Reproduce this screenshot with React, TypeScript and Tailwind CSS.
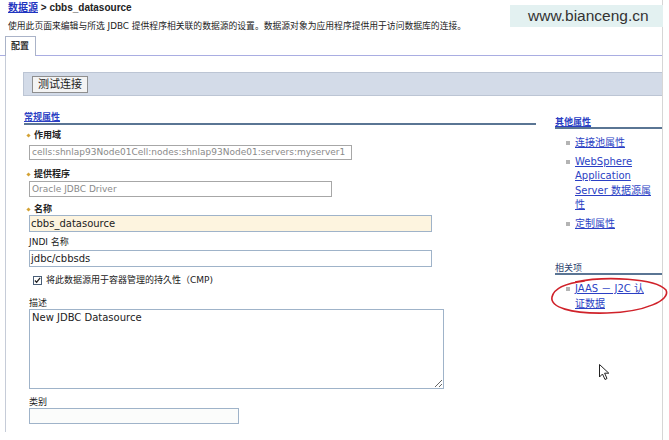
import React from "react"

const linkCls = "text-[#2b3fc4] underline underline-offset-[1px]"

function Field({ label, required, className = "" }: { label: string; required?: boolean; className?: string }) {
  return (
    <div className={"flex items-center h-[12px] text-[9px] leading-[12px] " + className}>
      {required ? (
        <span className="ml-[3px] mr-[4px] w-[3px] h-[3px] rotate-45 bg-[#d4a233]" />
      ) : (
        <span className="w-[5px]" />
      )}
      <span className={required ? "font-bold text-[#222]" : "text-[#222]"}>{label}</span>
    </div>
  )
}

function Bullet({ children }: { children: React.ReactNode }) {
  return (
    <li className="flex items-start">
      <span className="mt-[5px] ml-[11px] mr-[5px] w-[4px] h-[4px] bg-[#b4b4b4] shrink-0" />
      <span className={"w-[78px] " + linkCls}>{children}</span>
    </li>
  )
}

export default function App() {
  return (
    <div className="relative w-[669px] h-[440px] overflow-hidden bg-white text-[#1a1a1a] font-['DejaVu_Sans','Noto_Sans_CJK_SC',sans-serif]">
      <div className="flex h-full">
        <div className="w-[663px] border-r border-[#d6d6d6] flex flex-col pb-[8px]">
          {/* breadcrumb */}
          <div className="pl-[8px] pt-[1px]">
            <div className="h-[14px] text-[10px] leading-[14px] font-bold text-[#222] font-['Liberation_Sans','Noto_Sans_CJK_SC',sans-serif]">
              <span className="text-[#1f35c0] underline">数据源</span> &gt; cbbs_datasource
            </div>
            <div className="mt-[5px] h-[12px] text-[8.8px] leading-[12px] text-[#222] whitespace-nowrap">
              使用此页面来编辑与所选 JDBC 提供程序相关联的数据源的设置。数据源对象为应用程序提供用于访问数据库的连接。
            </div>
          </div>

          {/* tabs */}
          <div className="flex mt-[4px] h-[20px]">
            <div className="w-[5px] border-b border-[#a9ade2]" />
            <div className="w-[31px] border border-b-0 border-[#aab3c8] pl-[5px] pt-[3px] text-[9px] leading-[12px] font-bold text-[#333]">
              配置
            </div>
            <div className="flex-1 border-b border-[#a9ade2]" />
          </div>

          {/* panel */}
          <div className="flex-1 ml-[5px] border-l border-[#c6ccd8] pl-[17px] pt-[16px]">
            <div className="h-[24px] bg-[#d3dbe8] border border-r-0 border-[#bcc5d4] pl-[8px] pt-[3px] flex items-start">
              <button className="h-[17px] px-[5px] bg-[#f3f3f3] border border-[#8e8e8e] text-[11px] leading-[14px] text-[#222]">
                测试连接
              </button>
            </div>

            <div className="flex">
              {/* left column */}
              <div className="ml-[1px] w-[512px] mt-[15px]">
                <div className="h-[14px] border-b-2 border-[#5a7594] text-[9px] leading-[12px] font-bold">
                  <span className={linkCls}>常规属性</span>
                </div>
                <Field label="作用域" required className="mt-[4px]" />
                <div className="ml-[5px] mt-[4px] w-[323px] h-[15px] border border-[#a7a7a7] px-[2px] text-[9px] leading-[13px] text-[#8a8a8a] whitespace-nowrap overflow-hidden">
                  cells:shnlap93Node01Cell:nodes:shnlap93Node01:servers:myserver1
                </div>
                <Field label="提供程序" required className="mt-[8px]" />
                <div className="ml-[5px] mt-[1px] w-[303px] h-[16px] border border-[#a7a7a7] px-[2px] text-[9px] leading-[14px] text-[#8a8a8a] whitespace-nowrap">
                  Oracle JDBC Driver
                </div>
                <Field label="名称" required className="mt-[6px]" />
                <div className="ml-[5px] w-[403px] h-[17px] border border-[#9fb3c9] bg-[#fdf4df] px-[1px] text-[10px] leading-[15px] text-[#222] whitespace-nowrap">
                  cbbs_datasource
                </div>
                <Field label="JNDI 名称" className="mt-[4px]" />
                <div className="ml-[5px] mt-[2px] w-[403px] h-[17px] border border-[#9fb3c9] px-[1px] text-[10px] leading-[15px] text-[#222] whitespace-nowrap">
                  jdbc/cbbsds
                </div>
                <div className="mt-[7px] h-[12px] flex items-center text-[9px] leading-[12px]">
                  <span className="ml-[9px] mr-[4px] w-[9px] h-[9px] border border-[#4a5f78] bg-white flex items-center justify-center">
                    <svg viewBox="0 0 8 8" className="w-[7px] h-[7px]">
                      <path d="M1 4 L3 6 L7 1" fill="none" stroke="#222" strokeWidth="1.4" />
                    </svg>
                  </span>
                  <span className="text-[#222]">将此数据源用于容器管理的持久性（CMP)</span>
                </div>
                <Field label="描述" className="mt-[11px]" />
                <textarea
                  readOnly
                  defaultValue="New JDBC Datasource"
                  className="block ml-[5px] w-[415px] h-[80px] border border-[#9fb3c9] px-[2px] py-[1px] text-[10px] leading-[14px] text-[#222] outline-none"
                />
                <Field label="类别" className="mt-[7px]" />
                <div className="ml-[5px] w-[210px] h-[16px] border border-[#9fb3c9] bg-[#fbfcfb]" />
              </div>

              {/* right column */}
              <div className="ml-[19px] flex-1 mt-[21px]">
                <div className="h-[12px] border-b-2 border-[#5a7594] text-[9px] leading-[11px] font-bold">
                  <span className={linkCls}>其他属性</span>
                </div>
                <ul className="mt-[7px] flex flex-col gap-[4px] text-[10px] leading-[14.5px]">
                  <Bullet>连接池属性</Bullet>
                  <Bullet>WebSphere Application Server 数据源属性</Bullet>
                  <Bullet>定制属性</Bullet>
                </ul>
                <div className="mt-[31px] h-[13px] border-b-2 border-[#5a7594] text-[9px] leading-[12px] text-[#2c3f6e]">
                  相关项
                </div>
                <ul className="mt-[7px] flex flex-col text-[10px] leading-[14.5px]">
                  <Bullet>JAAS － J2C 认证数据</Bullet>
                </ul>
              </div>
            </div>
          </div>
        </div>
        <div className="flex-1" />
      </div>

      {/* watermark */}
      <div className="absolute left-[510px] top-[5px] w-[153px] h-[22px] bg-[#e3f1f1] pl-[18px] text-[15.5px] leading-[22px] text-[#333] font-['Liberation_Sans',sans-serif]">
        www.bianceng.cn
      </div>

      {/* hand-drawn red ellipse */}
      <svg className="absolute left-[545px] top-[274px] w-[124px] h-[46px]" viewBox="0 0 124 46">
        <path
          d="M30 8 C 60 2, 110 4, 121 16 C 126 26, 100 38, 62 39 C 25 40, 5 33, 7 23 C 9 14, 22 9, 40 7"
          fill="none"
          stroke="#d0222a"
          strokeWidth="1.6"
        />
      </svg>

      {/* mouse cursor */}
      <svg className="absolute left-[599px] top-[364px] w-[11px] h-[17px]" viewBox="0 0 11 17">
        <path d="M0.5 0.5 L0.5 13 L3.5 10 L6 15.5 L8 14.5 L5.6 9.2 L9.8 9.2 Z" fill="white" stroke="#222" strokeWidth="1" />
      </svg>
    </div>
  )
}
